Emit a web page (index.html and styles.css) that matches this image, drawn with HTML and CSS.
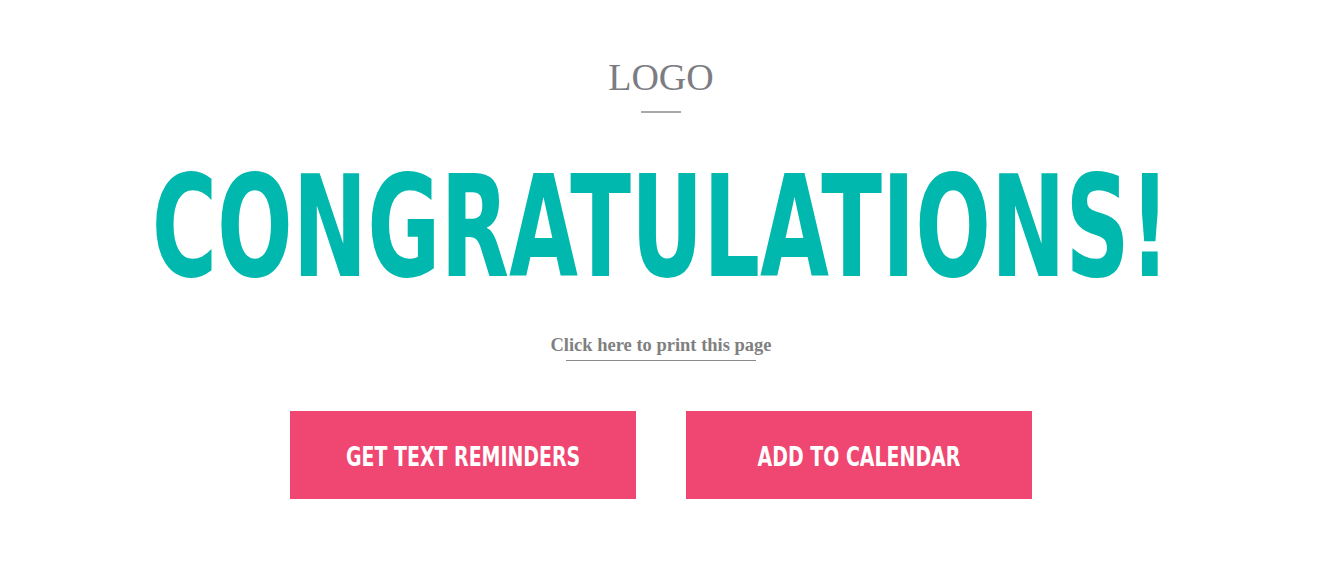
FILE: index.html
```html
<!DOCTYPE html>
<html lang="en">
<head>
    <meta charset="UTF-8">
    <meta name="viewport" content="width=device-width, initial-scale=1.0">
    <title>Congratulations</title>
    <link rel="stylesheet" href="styles.css">
</head>
<body>
    <header class="brand">
        <div class="logo">LOGO</div>
        <div class="logo-rule"></div>
    </header>

    <main class="thanks">
        <h1 class="headline"><span>CONGRATULATIONS!</span></h1>
        <a class="print-link" href="#" onclick="window.print(); return false;">Click here to print this page</a>

        <div class="actions">
            <a class="action-btn" href="#"><span>GET TEXT REMINDERS</span></a>
            <a class="action-btn" href="#"><span>ADD TO CALENDAR</span></a>
        </div>
    </main>
</body>
</html>
```

FILE: styles.css
```css
body {
    margin: 0;
    padding: 0;
    background-color: #ffffff;
    font-family: 'Liberation Serif', serif;
    overflow: hidden;
}

.brand {
    display: flex;
    flex-direction: column;
    align-items: center;
    padding-top: 53px;
}

.logo {
    font-family: 'Liberation Serif', serif;
    font-size: 38px;
    line-height: 48px;
    color: #7c7c82;
}

.logo-rule {
    width: 40px;
    height: 2px;
    margin-top: 10px;
    background-color: #a9a9a9; /* thin divider under logo */
}

.thanks {
    display: flex;
    flex-direction: column;
    align-items: center;
}

.headline {
    margin: 40px 0 0;
    font-family: 'DejaVu Sans Condensed', 'Liberation Sans', sans-serif;
    font-weight: bold;
    font-size: 99px;
    line-height: 150px;
    color: #00b8ad;
    white-space: nowrap;
}

.headline span {
    display: inline-block;
    transform: scaleY(1.42); /* stretch to a tall condensed look */
}

.print-link {
    position: relative;
    margin-top: 32px;
    font-family: 'Liberation Serif', serif;
    font-weight: bold;
    font-size: 18.5px;
    color: #808080;
    text-decoration: none;
    padding-bottom: 5px;
}

.print-link::after {
    content: "";
    position: absolute;
    left: 50%;
    bottom: 0;
    width: 190px;
    margin-left: -95px;
    height: 1px;
    background-color: #8a8a8a;
}

.actions {
    display: flex;
    gap: 50px;
    margin-top: 50px;
}

.action-btn {
    display: flex;
    align-items: center;
    justify-content: center;
    width: 346px;
    height: 88px;
    padding-top: 3px;
    box-sizing: border-box;
    background-color: #ef4771;
    color: #ffffff;
    text-decoration: none;
    font-family: 'DejaVu Sans Condensed', 'Liberation Sans', sans-serif;
    font-weight: bold;
    font-size: 27px;
}

.action-btn span {
    display: inline-block;
    transform: scaleX(0.78);
    white-space: nowrap;
}
```
